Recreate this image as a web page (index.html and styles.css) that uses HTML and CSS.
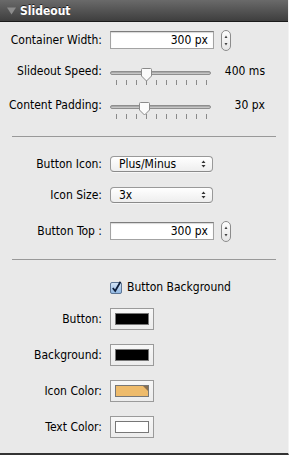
FILE: index.html
```html
<!DOCTYPE html>
<html lang="en">

<head>
  <meta charset="UTF-8" />
  <title>Slideout</title>
  <link rel="stylesheet" href="styles.css">
</head>

<body>
  <div class="panel">
    <!-- 标题栏 -->
    <div class="header">
      <svg class="disclosure" width="9" height="8" viewBox="0 0 9 8"><path d="M0 0.5 H9 L4.5 7.5 Z" fill="#8c8c8c"/></svg>
      <span>Slideout</span>
    </div>

    <div class="content">
      <div class="row">
        <div class="label">Container Width:</div>
        <div class="field">300 px</div>
        <span class="stepper">
          <svg width="10" height="21" viewBox="0 0 10 21"><path d="M3.5 8 L5 5.5 L6.5 8 Z M3.5 13 L5 15.5 L6.5 13 Z" fill="#444"/></svg>
        </span>
      </div>

      <div class="row gap-9">
        <div class="label">Slideout Speed:</div>
        <div class="slider">
          <div class="track"></div>
          <div class="ticks"><i></i><i></i><i></i><i></i><i></i><i></i><i></i><i></i><i></i><i></i></div>
          <svg class="thumb" style="left: 30px" width="13" height="14" viewBox="0 0 13 14"><path d="M1.5 1.5 Q1.5 0.5 2.5 0.5 H10.5 Q11.5 0.5 11.5 1.5 V8 L6.5 13 L1.5 8 Z" fill="#fbfbfb" stroke="#8a8a8a"/></svg>
        </div>
        <div class="value">400 ms</div>
      </div>

      <div class="row gap-12">
        <div class="label">Content Padding:</div>
        <div class="slider">
          <div class="track"></div>
          <div class="ticks"><i></i><i></i><i></i><i></i><i></i><i></i><i></i><i></i><i></i><i></i></div>
          <svg class="thumb" style="left: 28px" width="13" height="14" viewBox="0 0 13 14"><path d="M1.5 1.5 Q1.5 0.5 2.5 0.5 H10.5 Q11.5 0.5 11.5 1.5 V8 L6.5 13 L1.5 8 Z" fill="#fbfbfb" stroke="#8a8a8a"/></svg>
        </div>
        <div class="value">30 px</div>
      </div>

      <div class="separator sep-1"></div>

      <div class="row gap-16">
        <div class="label">Button Icon:</div>
        <div class="popup">
          <span>Plus/Minus</span>
          <svg width="7" height="10" viewBox="0 0 7 10"><path d="M1.5 4 L3.5 1.5 L5.5 4 Z M1.5 6 L3.5 8.5 L5.5 6 Z" fill="#333"/></svg>
        </div>
      </div>

      <div class="row gap-9">
        <div class="label">Icon Size:</div>
        <div class="popup">
          <span>3x</span>
          <svg width="7" height="10" viewBox="0 0 7 10"><path d="M1.5 4 L3.5 1.5 L5.5 4 Z M1.5 6 L3.5 8.5 L5.5 6 Z" fill="#333"/></svg>
        </div>
      </div>

      <div class="row gap-14">
        <div class="label">Button Top :</div>
        <div class="field">300 px</div>
        <span class="stepper">
          <svg width="10" height="21" viewBox="0 0 10 21"><path d="M3.5 8 L5 5.5 L6.5 8 Z M3.5 13 L5 15.5 L6.5 13 Z" fill="#444"/></svg>
        </span>
      </div>

      <div class="separator sep-2"></div>

      <div class="row gap-16">
        <div class="label"></div>
        <label class="check">
          <svg width="13" height="13" viewBox="0 0 13 13">
            <defs>
              <linearGradient id="cb" x1="0" y1="0" x2="0" y2="1">
                <stop offset="0" stop-color="#d6e6f7"/>
                <stop offset="1" stop-color="#8fb6e2"/>
              </linearGradient>
            </defs>
            <rect x="0.5" y="1.5" width="11" height="11" rx="1.5" fill="url(#cb)" stroke="#5d7594"/>
            <path d="M2.8 7 L5.2 10 L10.5 0.8" fill="none" stroke="#0d1e3a" stroke-width="1.8"/>
          </svg>
          <span>Button Background</span>
        </label>
      </div>

      <div class="row gap-10">
        <div class="label">Button:</div>
        <div class="well"><div class="swatch" style="background: #000"></div></div>
      </div>

      <div class="row gap-14">
        <div class="label">Background:</div>
        <div class="well"><div class="swatch" style="background: #000"></div></div>
      </div>

      <div class="row gap-14">
        <div class="label">Icon Color:</div>
        <div class="well"><div class="swatch corner" style="background: #eebb6b"></div></div>
      </div>

      <div class="row gap-14">
        <div class="label">Text Color:</div>
        <div class="well"><div class="swatch" style="background: #fff"></div></div>
      </div>
    </div>
  </div>
</body>

</html>
```

FILE: styles.css
```css
body {
    margin: 0;
    padding: 0;
    background-color: #e9e9e9;
    font-family: "DejaVu Sans Condensed", "DejaVu Sans", sans-serif;
    font-size: 12px;
    color: #000;
  }

  .panel {
    width: 289px;
    height: 455px;
    box-sizing: border-box;
    border-bottom: 2px solid #333;
    border-right: 1px solid #f3f3f3;
    background-color: #e9e9e9;
  }

  .header {
    height: 21px;
    display: flex;
    align-items: center;
    background: linear-gradient(#6a6a6a, #3e3e3e);
    border-bottom: 1px solid #1a1a1a;
    color: #fff;
    font-weight: bold;
    font-size: 12px;
    text-shadow: 0 -1px 0 #222;
  }

  .header .disclosure {
    margin: 1px 4px 0 7px;
  }

  .content {
    padding-top: 7px;
  }

  .row {
    display: flex;
    align-items: center;
    height: 22px;
  }

  .gap-9 { margin-top: 9px; }
  .gap-10 { margin-top: 10px; }
  .gap-12 { margin-top: 12px; }
  .gap-14 { margin-top: 14px; }
  .gap-16 { margin-top: 16px; }

  .label {
    width: 102px;
    margin-right: 8px;
    text-align: right;
    white-space: nowrap;
  }

  .field {
    width: 104px;
    height: 18px;
    box-sizing: border-box;
    padding-right: 5px;
    background-color: #fff;
    border: 1px solid #a3a3a3;
    border-top-color: #7d7d7d;
    box-shadow: inset 0 1px 1px #d8d8d8;
    text-align: right;
    line-height: 16px;
  }

  .stepper {
    display: block;
    width: 10px;
    height: 21px;
    margin-left: 7px;
    box-sizing: border-box;
    border: 1px solid #8c8c8c;
    border-radius: 5px;
    background: linear-gradient(#fdfdfd, #e6e6e6);
  }

  .stepper svg {
    display: block;
    margin: -1px 0 0 -1px;
  }

  .slider {
    position: relative;
    width: 101px;
    height: 22px;
  }

  .slider .track {
    margin-top: 11px;
    height: 4px;
    box-sizing: border-box;
    border: 1px solid #8e8e8e;
    border-radius: 2px;
    background: linear-gradient(#9c9c9c, #d4d4d4);
  }

  .slider .ticks {
    display: flex;
    justify-content: space-between;
    padding: 0 4px 0 6px;
    margin-top: 5px;
  }

  .slider .ticks i {
    display: block;
    width: 1px;
    height: 5px;
    background-color: #8a8a8a;
  }

  .slider .thumb {
    position: absolute;
    top: 8px;
  }

  .value {
    width: 54px;
    text-align: right;
  }

  .separator {
    height: 1px;
    margin: 0 12px 0 12px;
    background-color: #999;
  }

  .sep-1 { margin-top: 20px; }
  .sep-2 { margin-top: 17px; }

  .popup {
    width: 103px;
    height: 16px;
    box-sizing: border-box;
    display: flex;
    align-items: center;
    justify-content: space-between;
    padding: 0 5px 0 8px;
    border: 1px solid #999;
    border-bottom-color: #8a8a8a;
    border-radius: 4px;
    background: linear-gradient(#ffffff, #eeeeee);
    box-shadow: 0 1px 0 #f6f6f6;
  }

  .popup svg {
    display: block;
  }

  .check {
    display: flex;
    align-items: center;
  }

  .check svg {
    display: block;
    margin-right: 4px;
  }

  .well {
    width: 44px;
    height: 22px;
    box-sizing: border-box;
    padding: 4px;
    border: 1px solid #9a9a9a;
    background: linear-gradient(#f7f7f7, #ececec);
  }

  .swatch {
    position: relative;
    height: 12px;
    box-sizing: border-box;
    border: 1px solid #777;
  }

  .swatch.corner::after {
    content: "";
    position: absolute;
    top: 0;
    right: 0;
    border-top: 5px solid #8a7050;
    border-left: 5px solid transparent;
  }
```
